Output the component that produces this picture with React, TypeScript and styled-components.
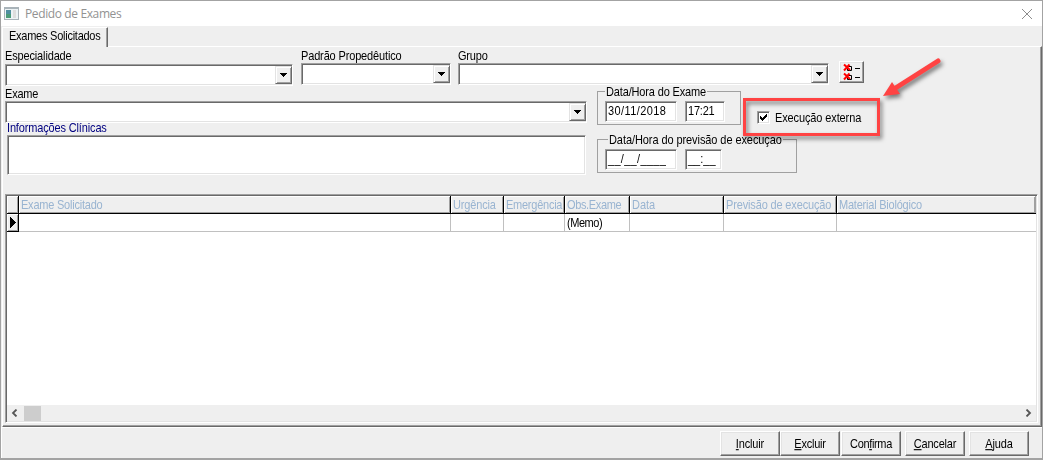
import React from 'react';
import styled, { createGlobalStyle } from 'styled-components';

const Global = createGlobalStyle`
  * { box-sizing: border-box; }
  html, body { margin: 0; padding: 0; overflow: hidden; }
  body { background: #efefef; font-family: "Liberation Sans", Arial, sans-serif; font-size: 11px; line-height: 14px; color: #000; }
`;

const Window = styled.div`
  position: relative;
  width: 1043px;
  height: 460px;
  display: flex;
  flex-direction: column;
  background: #efefef;
  border: 1px solid #a3a3a3;
  border-bottom-width: 2px;
`;

const TitleBar = styled.header`
  height: 25px;
  flex: none;
  display: flex;
  align-items: center;
  gap: 6px;
  padding: 0 9px 0 3px;
  background: #fff;
`;

const Title = styled.h1`
  margin: 0;
  flex: 1;
  font: 400 12px/16px "Open Sans", "Noto Sans", sans-serif;
  letter-spacing: -0.38px;
  color: #929292;
`;

const Text = styled.span<{ $ls?: number; $color?: string }>`
  display: block;
  white-space: pre;
  transform: scaleY(1.12);
  transform-origin: 0 11px;
  letter-spacing: ${p => p.$ls ?? 0}px;
  color: ${p => p.$color ?? '#000'};
`;

const TabStrip = styled.div`
  height: 20px;
  flex: none;
  display: flex;
  padding: 1px 0 0 1px;
`;

const Tab = styled.div`
  width: 106px;
  height: 20px;
  position: relative;
  padding: 1px 0 0 6px;
  background: #efefef;
  border-top: 1px solid #fff;
  border-left: 1px solid #fff;
  border-right: 1px solid #696969;
  box-shadow: inset -1px 0 #a0a0a0;
`;

const Panel = styled.main`
  height: 381px;
  flex: none;
  margin-left: 1px;
  display: flex;
  flex-direction: column;
  border: 1px solid #fff;
  border-right-color: #696969;
  border-bottom-color: #696969;
  box-shadow: inset -1px -1px #a0a0a0;
  padding: 2px 4px 3px 2px;
`;

const Form = styled.section`
  height: 145px;
  flex: none;
  display: flex;
  flex-direction: column;
`;

const FormRow = styled.div<{ $h: number }>`
  height: ${p => p.$h}px;
  flex: none;
  display: flex;
`;

const Field = styled.label<{ $w: number; $ml?: number; $mt?: number; $gap?: number }>`
  width: ${p => p.$w}px;
  flex: none;
  margin-left: ${p => p.$ml ?? 0}px;
  margin-top: ${p => p.$mt ?? 0}px;
  display: flex;
  flex-direction: column;
  gap: ${p => p.$gap ?? 0}px;
`;

const Sunken = styled.div<{ $w?: number; $h: number }>`
  ${p => (p.$w ? `width: ${p.$w}px;` : '')}
  height: ${p => p.$h}px;
  flex: none;
  display: flex;
  background: #fff;
  border: 1px solid;
  border-color: #a0a0a0 #fff #fff #a0a0a0;
  box-shadow: inset 1px 1px #696969, inset -1px -1px #e3e3e3;
`;

const Combo = styled(Sunken)`
  justify-content: flex-end;
  padding: 1px 0;
`;

const DropButton = styled.div`
  width: 17px;
  display: flex;
  align-items: center;
  justify-content: center;
  background: #efefef;
  border: 1px solid;
  border-color: #e3e3e3 #696969 #696969 #e3e3e3;
  box-shadow: inset 1px 1px #fff, inset -1px -1px #a0a0a0;
`;

const Raised = styled.button<{ $w: number; $h: number; $ml?: number; $mt?: number }>`
  width: ${p => p.$w}px;
  height: ${p => p.$h}px;
  margin: ${p => p.$mt ?? 0}px 0 0 ${p => p.$ml ?? 0}px;
  padding: 0;
  flex: none;
  display: flex;
  align-items: center;
  justify-content: center;
  font: inherit;
  color: #000;
  background: #efefef;
  border: 1px solid;
  border-color: #fff #696969 #696969 #fff;
  box-shadow: inset -1px -1px #a0a0a0, inset 1px 1px #e3e3e3;
`;

const Columns = styled.div`
  display: flex;
  height: 100px;
`;

const LeftColumn = styled.div`
  width: 582px;
  flex: none;
`;

const GroupColumn = styled.div`
  width: 200px;
  margin: -2px 0 0 10px;
  flex: none;
  display: flex;
  flex-direction: column;
  gap: 8px;
`;

const Group = styled.fieldset<{ $w: number; $h: number; $lx: number }>`
  width: ${p => p.$w}px;
  height: ${p => p.$h}px;
  flex: none;
  margin: 0;
  padding: 0 0 0 7px;
  border: 1px solid #a0a0a0;
  display: flex;
  flex-direction: column;

  legend {
    height: 12px;
    margin-left: ${p => p.$lx - 7}px;
    padding: 0 1px;
    background: #efefef;
  }
`;

const Inputs = styled.div`
  display: flex;
  gap: 8px;
  margin-top: 4px;
`;

const Edit = styled(Sunken)`
  padding: 2px 0 0 2px;
`;

const CheckLabel = styled.div`
  display: flex;
  gap: 5px;
  height: 14px;
  margin: 24px 0 0 -40px;
`;

const CheckBox = styled(Sunken)`
  align-items: center;
  justify-content: center;
`;

const Grid = styled.section`
  width: 1033px;
  height: 229px;
  flex: none;
  display: flex;
  flex-direction: column;
  background: #fff;
  border: 1px solid;
  border-color: #a0a0a0 #fff #fff #a0a0a0;
  box-shadow: inset 1px 1px #696969, inset -1px -1px #e3e3e3;
  padding: 1px;
`;

const cols = '12px 432px 53px 61px 65px 94px 113px 1fr';

const HeadRow = styled.div`
  display: grid;
  grid-template-columns: ${cols};
  height: 18px;
  flex: none;
  border-bottom: 1px solid #000;
`;

const HeadCell = styled.div`
  padding: 2px 0 0 2px;
  background: #efefef;
  border-right: 1px solid #000;
  box-shadow: inset 1px 1px #fff, inset -1px -1px #a0a0a0;
  &:last-child { border-right-color: #a0a0a0; }
`;

const BodyRow = styled.div`
  display: grid;
  grid-template-columns: ${cols};
  height: 18px;
  flex: none;
`;

const Cell = styled.div`
  padding: 2px 0 0 2px;
  border-right: 1px solid #c0c0c0;
  border-bottom: 1px solid #c0c0c0;
  &:last-child { border-right: 0; }
`;

const Marker = styled.div`
  display: flex;
  align-items: center;
  justify-content: center;
  background: #efefef;
  border-right: 1px solid #000;
  border-bottom: 1px solid #000;
  box-shadow: inset 1px 1px #fff, inset -1px -1px #a0a0a0;
`;

const ScrollBar = styled.div`
  height: 16px;
  flex: none;
  margin-top: auto;
  display: flex;
  align-items: center;
  padding: 0 4px;
  background: #efefef;
`;

const Thumb = styled.div`
  width: 17px;
  height: 15px;
  margin: 0 auto 0 6px;
  background: #cdcdcd;
`;

const Footer = styled.footer`
  flex: 1;
  display: flex;
  padding: 3px 0 0 718px;
  border-top: 1px solid #fff;
  border-left: 1px solid #fff;
`;

const Callout = styled.div`
  position: absolute;
  left: 742px;
  top: 97px;
  width: 137px;
  height: 38px;
  border: 3px solid #ff4343;
  filter: drop-shadow(2px 3px 2px rgba(0, 0, 0, 0.5));
`;

const Arrow = styled.svg`
  position: absolute;
  left: 874px;
  top: 49px;
  filter: drop-shadow(2px 3px 2px rgba(0, 0, 0, 0.5));
`;

const Drop = () => (
  <DropButton>
    <svg width="7" height="4" shapeRendering="crispEdges">
      <path d="M0 0h7v1h-1v1h-1v1h-1v1h-1v-1h-1v-1h-1v-1h-1z" />
    </svg>
  </DropButton>
);

const headers: [string, number][] = [
  ['Exame Solicitado', -0.22],
  ['Urgência', -0.15],
  ['Emergência', -0.25],
  ['Obs.Exame', -0.35],
  ['Data', 0],
  ['Previsão de execução', -0.15],
  ['Material Biológico', -0.22],
];

export default function App() {
  return (
    <>
      <Global />
      <Window>
        <TitleBar>
          <svg width="15" height="13" shapeRendering="crispEdges">
            <path fill="#a9b3b9" d="M0 0h15v13h-15z" />
            <path fill="#edf3f5" d="M1 2h13v10h-13z" />
            <path fill="#4f8fa0" d="M2 3h5v8h-5z" />
            <path fill="#4b9b78" d="M2 7h5v4h-5z" />
            <path fill="#dedede" d="M9 3h3v8h-3z" />
          </svg>
          <Title>Pedido de Exames</Title>
          <svg width="12" height="12" viewBox="0 0 12 12">
            <path d="M1 1l10 10M11 1L1 11" stroke="#8c8c8c" fill="none" />
          </svg>
        </TitleBar>

        <TabStrip>
          <Tab><Text $ls={-0.25}>Exames Solicitados</Text></Tab>
        </TabStrip>

        <Panel>
          <Form>
            <FormRow $h={38}>
              <Field $w={288} $gap={1}><Text $ls={-0.15}>Especialidade</Text><Combo $h={22}><Drop /></Combo></Field>
              <Field $w={150} $ml={8}><Text $ls={-0.15}>Padrão Propedêutico</Text><Combo $h={22}><Drop /></Combo></Field>
              <Field $w={371} $ml={7}><Text $ls={-0.2}>Grupo</Text><Combo $h={22}><Drop /></Combo></Field>
              <Raised $w={25} $h={22} $ml={10} $mt={12} aria-label="Limpar seleção">
                <svg width="19" height="18" viewBox="0 0 19 18">
                  {[1, 10].map(y => (
                    <g key={y} transform={`translate(0 ${y})`} fill="none">
                      <path d="M5.500 2.500h4v4h-4z" stroke="#000" />
                      <path d="M2 0.500l6 5.500M7.500 0.500L2 6.500" stroke="#f00" strokeWidth="2" />
                      <path d="M13 4.500h5" stroke="#000" />
                    </g>
                  ))}
                </svg>
              </Raised>
            </FormRow>

            <Columns>
              <LeftColumn>
                <Field $w={582}><Text $ls={-0.2}>Exame</Text><Combo $h={22}><Drop /></Combo></Field>
                <Field $w={579} $ml={2} $mt={-2}><Text $ls={-0.15} $color="#000080">Informações Clínicas</Text><Sunken $h={40} /></Field>
              </LeftColumn>
              <GroupColumn>
                <Group $w={144} $h={40} $lx={7}>
                  <legend><Text $ls={-0.15}>Data/Hora do Exame</Text></legend>
                  <Inputs>
                    <Edit $w={72} $h={21}><Text $ls={0.4}>30/11/2018</Text></Edit>
                    <Edit $w={40} $h={21}><Text $ls={-0.2}>17:21</Text></Edit>
                  </Inputs>
                </Group>
                <Group $w={200} $h={40} $lx={10}>
                  <legend><Text $ls={-0.08}>Data/Hora do previsão de execução</Text></legend>
                  <Inputs>
                    <Edit $w={72} $h={21}><Text $ls={0.3}>__/__/____</Text></Edit>
                    <Edit $w={37} $h={21}><Text>__:__</Text></Edit>
                  </Inputs>
                </Group>
              </GroupColumn>
              <CheckLabel>
                <CheckBox $w={13} $h={13}>
                  <svg width="7" height="7" shapeRendering="crispEdges">
                    <path d="M0 2h1v1h1v1h1v-1h1v-1h1v-1h1v-1h1v3h-1v1h-1v1h-1v1h-1v1h-1v-1h-1v-1h-1z" />
                  </svg>
                </CheckBox>
                <Text $ls={-0.12}>Execução externa</Text>
              </CheckLabel>
            </Columns>
          </Form>

          <Grid>
            <HeadRow>
              <HeadCell />
              {headers.map(([h, ls]) => (
                <HeadCell key={h}><Text $ls={ls} $color="#99b4d1">{h}</Text></HeadCell>
              ))}
            </HeadRow>
            <BodyRow>
              <Marker>
                <svg width="6" height="11" shapeRendering="crispEdges"><path d="M0 0L6 5.500L0 11z" /></svg>
              </Marker>
              <Cell /><Cell /><Cell />
              <Cell><Text $ls={-0.45}>(Memo)</Text></Cell>
              <Cell /><Cell /><Cell />
            </BodyRow>
            <ScrollBar>
              <svg width="7" height="8" viewBox="0 0 7 8"><path d="M5.500 0.500L2 4l3.500 3.500" stroke="#555" strokeWidth="1.800" fill="none" /></svg>
              <Thumb />
              <svg width="7" height="8" viewBox="0 0 7 8"><path d="M1.500 0.500L5 4L1.500 7.500" stroke="#555" strokeWidth="1.800" fill="none" /></svg>
            </ScrollBar>
          </Grid>
        </Panel>

        <Footer>
          <Raised $w={60} $h={25}><Text $ls={-0.15}><u>I</u>ncluir</Text></Raised>
          <Raised $w={60} $h={25}><Text $ls={-0.25}><u>E</u>xcluir</Text></Raised>
          <Raised $w={60} $h={25} $ml={1}><Text $ls={-0.35}>Con<u>f</u>irma</Text></Raised>
          <Raised $w={60} $h={25} $ml={4}><Text $ls={-0.2}><u>C</u>ancelar</Text></Raised>
          <Raised $w={60} $h={25} $ml={4}><Text $ls={-0.15}><u>A</u>juda</Text></Raised>
        </Footer>

        <Callout />
        <Arrow width="70" height="52" viewBox="875 50 70 52">
          <path d="M938 61L894 89" stroke="#ff4343" strokeWidth="5" strokeLinecap="round" />
          <path d="M883 96L892 82L900 94z" fill="#ff4343" />
        </Arrow>
      </Window>
    </>
  );
}
